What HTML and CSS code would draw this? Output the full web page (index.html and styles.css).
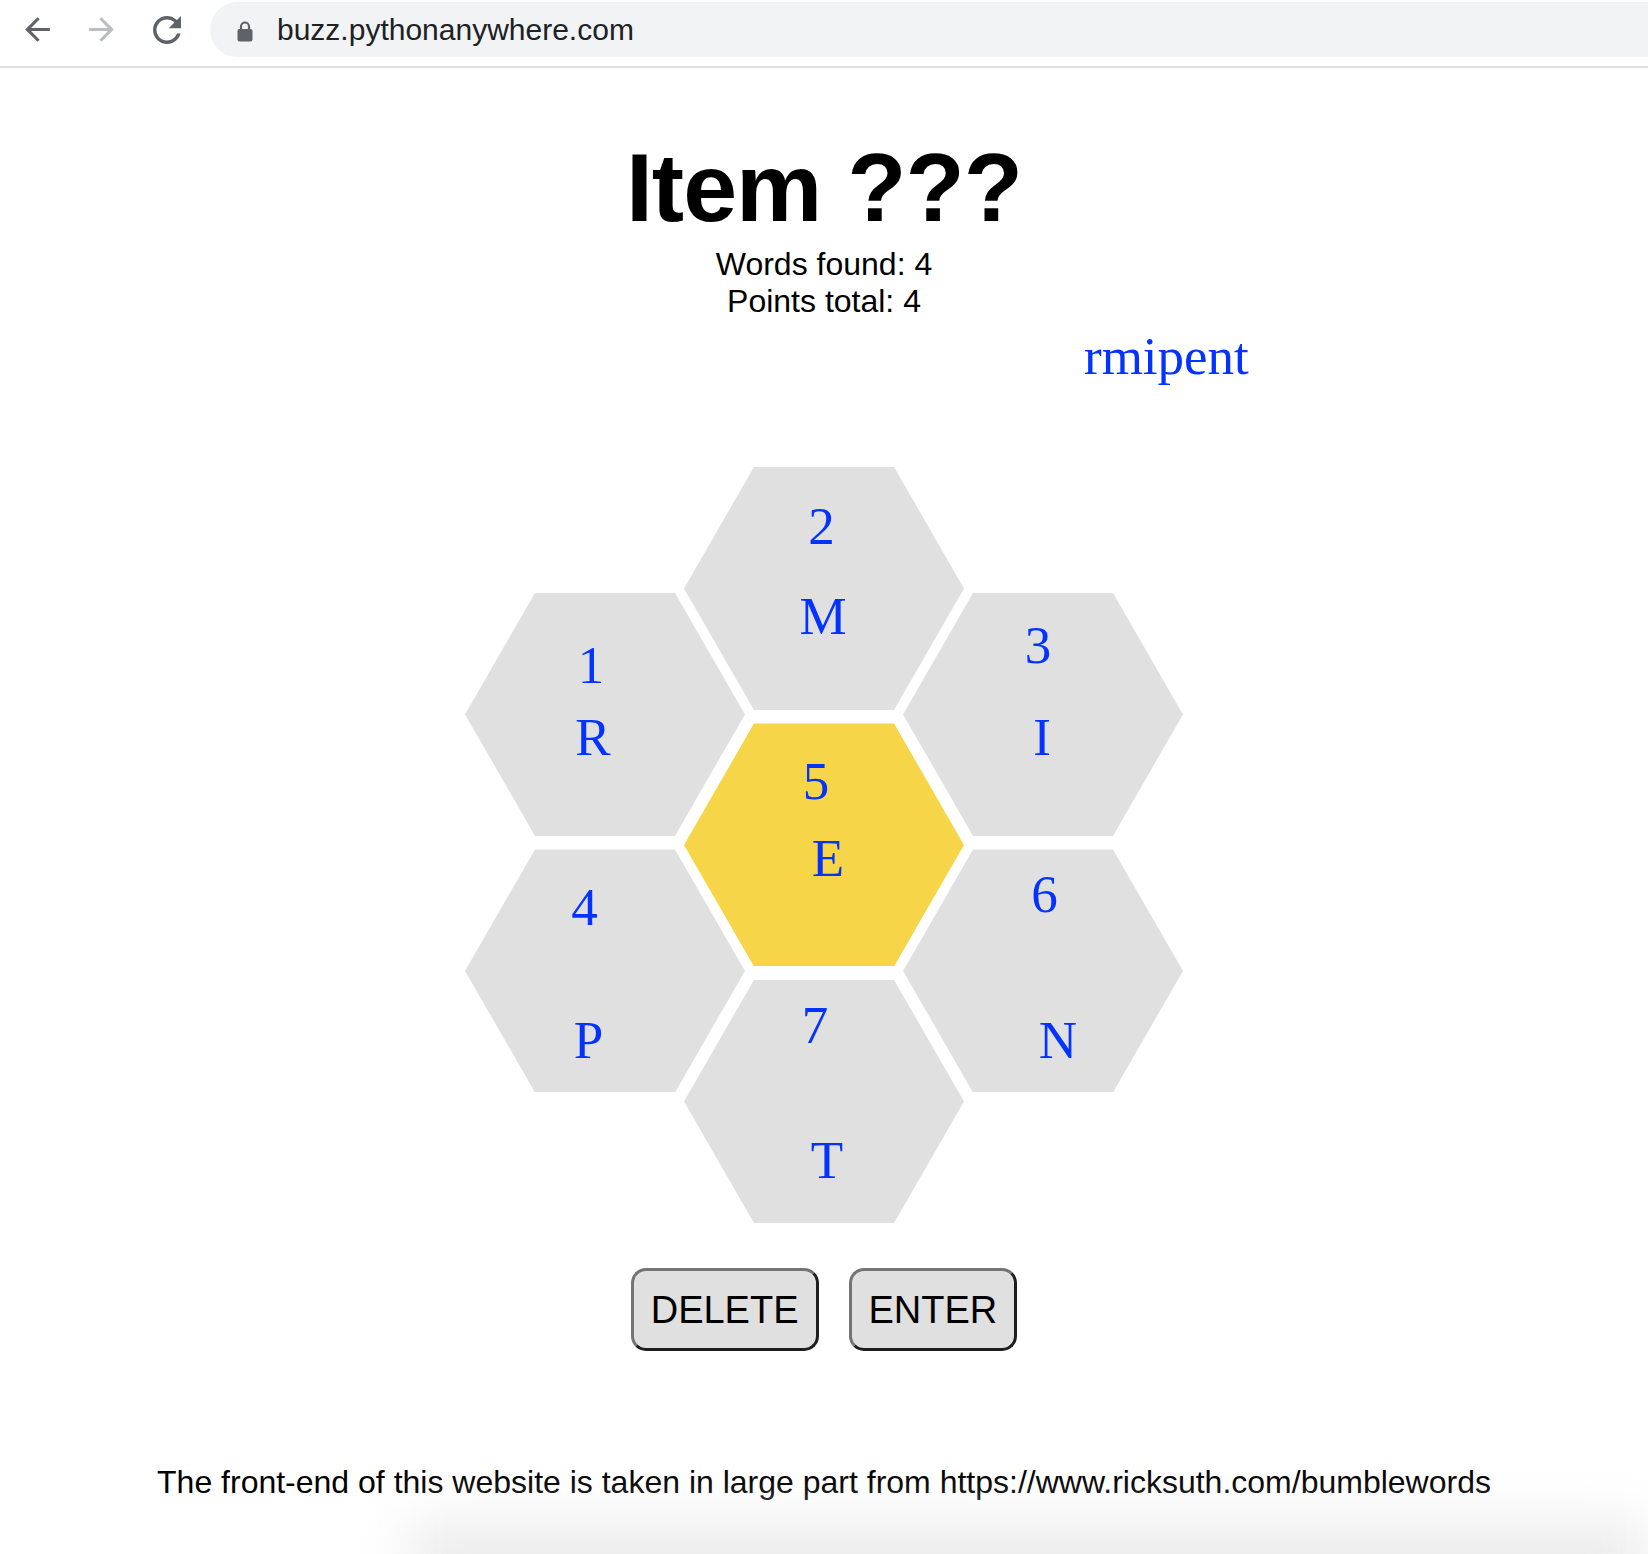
FILE: index.html
```html
<!DOCTYPE html>
<html lang="en">
<head>
<meta charset="utf-8">
<title>Item ???</title>
<link rel="stylesheet" href="styles.css">
</head>
<body>
<header class="chrome">
  <svg class="ico ico-back" viewBox="0 0 24 24"><path d="M20 11H7.83l5.59-5.59L12 4l-8 8 8 8 1.41-1.41L7.83 13H20v-2z"/></svg>
  <svg class="ico ico-fwd" viewBox="0 0 24 24"><path d="M12 4l-1.41 1.41L16.17 11H4v2h12.17l-5.58 5.59L12 20l8-8z"/></svg>
  <svg class="ico ico-reload" viewBox="0 0 24 24"><path d="M17.65 6.35C16.2 4.9 14.21 4 12 4c-4.42 0-7.99 3.58-7.990 8s3.57 8 7.990 8c3.73 0 6.84-2.55 7.73-6h-2.08c-.82 2.33-3.04 4-5.65 4-3.31 0-6-2.69-6-6s2.69-6 6-6c1.66 0 3.14.69 4.22 1.78L13 11h7V4l-2.35 2.35z"/></svg>
  <div class="omnibox">
    <svg class="lock" viewBox="0 0 16 22"><path d="M4 10V6.5a4 4 0 0 1 8 0V10" fill="none" stroke="#5f6368" stroke-width="2.2"/><rect x="0.5" y="9" width="15" height="12.5" rx="2" fill="#5f6368"/></svg>
    <span class="url">buzz.pythonanywhere.com</span>
  </div>
</header>
<main class="page">
  <h1 class="title">Item ???</h1>
  <div class="stats">
    <div>Words found: 4</div>
    <div>Points total: 4</div>
  </div>
  <div class="guess">rmipent</div>
  <div class="hive">
    <div class="hex hex-r"><span class="num">1</span><span class="let">R</span></div>
    <div class="hex hex-m"><span class="num">2</span><span class="let">M</span></div>
    <div class="hex hex-i"><span class="num">3</span><span class="let">I</span></div>
    <div class="hex hex-p"><span class="num">4</span><span class="let">P</span></div>
    <div class="hex hex-e center"><span class="num">5</span><span class="let">E</span></div>
    <div class="hex hex-n"><span class="num">6</span><span class="let">N</span></div>
    <div class="hex hex-t"><span class="num">7</span><span class="let">T</span></div>
  </div>
  <div class="buttons">
    <button class="btn">DELETE</button>
    <button class="btn">ENTER</button>
  </div>
  <p class="credit">The front-end of this website is taken in large part from https://www.ricksuth.com/bumblewords</p>
  <div class="shade"></div>
</main>
</body>
</html>
```
FILE: styles.css
```css
html, body {
  margin: 0;
  padding: 0;
  background: #ffffff;
  overflow: hidden;
}
body {
  font-family: "Liberation Sans", Arial, sans-serif;
  color: #000;
}

/* browser chrome */
.chrome {
  display: flex;
  align-items: flex-start;
  height: 66px;
  border-bottom: 2px solid #dedede;
}
.ico {
  flex: none;
}
.ico-back {
  width: 37px;
  height: 37px;
  margin: 11px 0 0 19px;
  fill: #5f6368;
}
.ico-fwd {
  width: 37px;
  height: 37px;
  margin: 11px 0 0 27px;
  fill: #babdc1;
}
.ico-reload {
  width: 42px;
  height: 42px;
  margin: 9px 0 0 26px;
  fill: #5f6368;
}
.omnibox {
  flex: 1;
  display: flex;
  align-items: center;
  height: 55px;
  margin: 2px 0 0 22px;
  border-radius: 28px 0 0 28px;
  background: #f1f3f4;
}
.lock {
  width: 16px;
  height: 22px;
  margin: 2px 0 0 27px;
}
.url {
  margin-left: 24px;
  font-size: 30px;
  color: #202124;
}

/* page */
.page {
  text-align: center;
}
.title {
  margin: 64.5px 0 0;
  font-size: 97px;
  line-height: 110px;
  font-weight: 700;
  letter-spacing: -1px;
}
.stats {
  margin-top: 3.8px;
  font-size: 32px;
  line-height: 37px;
}
.guess {
  margin-top: 6.2px;
  padding-left: 1084px;
  text-align: left;
  font-family: "Liberation Serif", "Times New Roman", serif;
  font-size: 53px;
  line-height: 61px;
  color: #0433ff;
}

/* honeycomb */
.hive {
  display: grid;
  grid-template-columns: 219px 219px 280px;
  grid-template-rows: 126px 130.5px 126px 130.5px 126px 130.5px;
  width: 718px;
  margin: 79.4px auto 0;
}
.hex {
  box-sizing: border-box;
  width: 280px;
  height: 243px;
  background: #e0e0e0;
  clip-path: polygon(25% 0, 75% 0, 100% 50%, 75% 100%, 25% 100%, 0 50%);
  display: flex;
  flex-direction: column;
  align-items: center;
  padding-top: var(--pt);
  gap: var(--gap);
}
.hex.center {
  background: #f6d548;
}
.num, .let {
  font-family: "Liberation Serif", "Times New Roman", serif;
  font-size: 53px;
  line-height: 53px;
  color: #0433ff;
}
.num { margin-left: var(--nx); }
.let { margin-left: var(--lx); }

.hex-r { grid-column: 1; grid-row: 2 / 4; --pt: 46px;   --gap: 19.5px; --nx: -28px; --lx: -24px; }
.hex-m { grid-column: 2; grid-row: 1 / 3; --pt: 33.6px; --gap: 37px;   --nx: -5px;  --lx: -2px; }
.hex-i { grid-column: 3; grid-row: 2 / 4; --pt: 26.6px; --gap: 39px;   --nx: -10px; --lx: -2px; }
.hex-p { grid-column: 1; grid-row: 4 / 6; --pt: 31.6px; --gap: 80.5px; --nx: -41px; --lx: -33px; }
.hex-e { grid-column: 2; grid-row: 3 / 5; --pt: 31.6px; --gap: 24.5px; --nx: -16px; --lx: 8px; }
.hex-n { grid-column: 3; grid-row: 4 / 6; --pt: 19px;   --gap: 93px;   --nx: 3px;   --lx: 30px; }
.hex-t { grid-column: 2; grid-row: 5 / 7; --pt: 19.6px; --gap: 81.5px; --nx: -18px; --lx: 6px; }

/* buttons */
.buttons {
  display: flex;
  justify-content: center;
  gap: 30px;
  margin-top: 32px;
}
.btn {
  font-family: "Liberation Sans", Arial, sans-serif;
  font-size: 38px;
  line-height: normal;
  color: #000;
  background: #e0e0e0;
  border: 3px solid;
  border-color: #747474 #1e1e1e #1e1e1e #747474;
  border-radius: 15px;
  padding: 17.5px 17px 15.8px;
  margin: 0;
}

/* footer */
.credit {
  margin: 113.4px 0 0;
  font-size: 32px;
  line-height: 37px;
}
.shade {
  height: 70px;
  margin: 22px 0 0 410px;
  background: #ebebeb;
  filter: blur(26px);
}
```
